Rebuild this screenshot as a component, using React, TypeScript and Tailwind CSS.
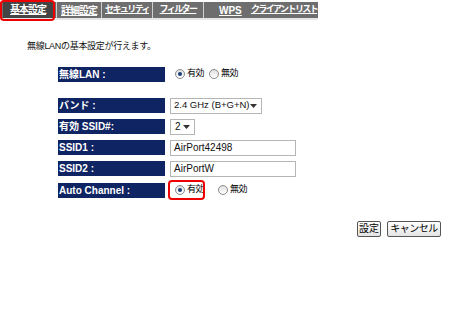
import React from "react";

const jp = { fontFamily: '"Liberation Sans", "Noto Sans CJK JP", sans-serif' };

function Radio({ checked }: { checked?: boolean }) {
  return (
    <span className="inline-flex shrink-0 w-[10px] h-[10px] rounded-full border border-[#8a8a8a] bg-gradient-to-b from-[#e0e0e0] to-white items-center justify-center">
      {checked && <span className="w-[4px] h-[4px] rounded-full bg-[#1c3f7a]" />}
    </span>
  );
}

function Label({ children }: { children: React.ReactNode }) {
  return (
    <div className="w-[107px] shrink-0 h-[15px] bg-[#0f2462] text-white font-bold text-[10px] leading-[15px] pl-[1px] whitespace-nowrap">
      {children}
    </div>
  );
}

function Caret() {
  return (
    <svg width="7" height="4" viewBox="0 0 7 4" className="shrink-0">
      <path d="M0 0h7L3.5 4z" fill="#333" />
    </svg>
  );
}

export default function App() {
  const tabs = [
    { t: "詳細設定", w: 45, k: true },
    { t: "セキュリティ", w: 51 },
    { t: "フィルター", w: 51 },
    { t: "WPS", w: 47, latin: true },
    { t: "クライアントリスト", w: 68, nosep: true },
  ];
  return (
    <div className="w-[450px] h-[309px] bg-white relative overflow-hidden" style={jp}>
      <div className="pt-[2px]">
        <div className="w-[318px] h-[16px] bg-[#6e6e6e] flex items-stretch">
          <div className="relative w-[53px] shrink-0 pl-[3px] flex">
            <div className="w-[50px] bg-[#444] text-white text-[10px] tracking-[-1px] font-bold leading-[16px] text-center underline whitespace-nowrap">
              基本設定
            </div>
            <div className="absolute left-[0px] top-[-2px] w-[55px] h-[21px] border-[2px] border-[#ee0000] rounded-[4px]" />
          </div>
          <div className="w-[3px] shrink-0" />
          {tabs.map((tb, i) => (
            <div
              key={i}
              className={`flex shrink-0 items-center text-white font-bold underline whitespace-nowrap ${
                tb.nosep ? "" : "border-l border-[#cfcfcf]"
              } ${tb.latin ? "justify-start pl-[15px] text-[10px]" : "justify-center"} ${
                tb.k ? "text-[10px] tracking-[-1px]" : tb.latin ? "" : "text-[9px] tracking-[-1.6px]"
              }`}
              style={{ width: tb.w }}
            >
              {tb.t}
            </div>
          ))}
        </div>
        <div className="w-[318px] h-[2px] bg-[#e6e6e6]" />
      </div>

      <div className="pl-[27px] pt-[20px] text-[9px] tracking-[-0.3px] text-[#111] whitespace-nowrap">
        無線LANの基本設定が行えます。
      </div>

      <div className="pl-[58px] pt-[13px] flex flex-col">
        <div className="flex items-center h-[15px] gap-[5px]">
          <Label>無線LAN :</Label>
          <div className="flex items-center gap-[2px] text-[9px] tracking-[-0.5px] pl-[5px] whitespace-nowrap">
            <Radio checked />
            <span>有効</span>
            <span className="w-[1px]" />
            <Radio />
            <span>無効</span>
          </div>
        </div>

        <div className="flex items-center h-[16px] gap-[5px] mt-[16px]">
          <Label>バンド :</Label>
          <div className="h-[16px] w-[92px] border border-[#b5b5b5] flex items-center justify-between pl-[3px] pr-[5px] text-[9.5px] text-[#111] whitespace-nowrap">
            <span>2.4 GHz (B+G+N)</span>
            <Caret />
          </div>
        </div>

        <div className="flex items-center h-[16px] gap-[5px] mt-[5px]">
          <Label>有効 SSID#:</Label>
          <div className="h-[16px] w-[25px] border border-[#b5b5b5] flex items-center justify-between pl-[4px] pr-[4px] text-[10px] text-[#111]">
            <span>2</span>
            <Caret />
          </div>
        </div>

        <div className="flex items-center h-[16px] gap-[5px] mt-[5px]">
          <Label>SSID1 :</Label>
          <div className="h-[16px] w-[126px] border border-[#b5b5b5] flex items-center pl-[3px] text-[10px] text-[#111]">
            AirPort42498
          </div>
        </div>

        <div className="flex items-center h-[16px] gap-[5px] mt-[5px]">
          <Label>SSID2 :</Label>
          <div className="h-[16px] w-[126px] border border-[#b5b5b5] flex items-center pl-[3px] text-[10px] text-[#111]">
            AirPortW
          </div>
        </div>

        <div className="flex items-center h-[15px] gap-[5px] mt-[6px]">
          <Label>Auto Channel :</Label>
          <div className="flex items-center gap-[2px] text-[9px] tracking-[-0.5px] pl-[5px] relative whitespace-nowrap">
            <Radio checked />
            <span>有効</span>
            <span className="w-[10px]" />
            <Radio />
            <span>無効</span>
            <div className="absolute left-[-2px] top-[-3px] w-[37px] h-[20px] border-[2px] border-[#ee0000] rounded-[4px]" />
          </div>
        </div>
      </div>

      <div className="flex justify-end gap-[6px] pr-[9px] mt-[23px]">
        <button className="h-[16px] w-[24px] border border-[#555] bg-gradient-to-b from-white to-[#e4e4e4] text-[10px] leading-[14px] rounded-[2px] whitespace-nowrap">
          設定
        </button>
        <button className="h-[16px] w-[54px] border border-[#555] bg-gradient-to-b from-white to-[#e4e4e4] text-[10px] tracking-[-0.5px] leading-[14px] rounded-[2px] whitespace-nowrap">
          キャンセル
        </button>
      </div>
    </div>
  );
}
